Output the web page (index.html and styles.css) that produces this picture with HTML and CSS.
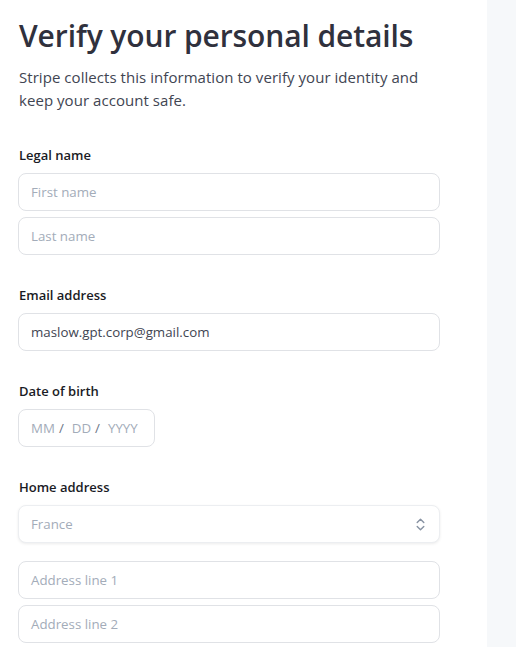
FILE: index.html
```html
<!DOCTYPE html>
<html lang="en">
<head>
<meta charset="utf-8">
<title>Verify your personal details</title>
<link rel="stylesheet" href="styles.css">
</head>
<body>
<div class="page">
  <main class="main">
    <header class="header">
      <h1 class="title">Verify your personal details</h1>
      <p class="subtitle">Stripe collects this information to verify your identity and keep your account safe.</p>
    </header>

    <section class="field">
      <div class="label">Legal name</div>
      <div class="stack">
        <div class="input"><span class="ph">First name</span></div>
        <div class="input"><span class="ph">Last name</span></div>
      </div>
    </section>

    <section class="field">
      <div class="label">Email address</div>
      <div class="input"><span class="val">maslow.gpt.corp@gmail.com</span></div>
    </section>

    <section class="field">
      <div class="label">Date of birth</div>
      <div class="input date">
        <span class="ph">MM</span><span class="sep">/</span><span class="ph">DD</span><span class="sep">/</span><span class="ph">YYYY</span>
      </div>
    </section>

    <section class="field">
      <div class="label">Home address</div>
      <div class="input select">
        <span class="ph">France</span>
        <svg class="chev" width="9" height="13" viewBox="0 0 9 13" aria-hidden="true">
          <path d="M1.2 4.6 L4.5 1.3 L7.8 4.6" fill="none" stroke="#8792a2" stroke-width="1.4" stroke-linecap="round" stroke-linejoin="round"/>
          <path d="M1.2 8.4 L4.5 11.7 L7.8 8.4" fill="none" stroke="#8792a2" stroke-width="1.4" stroke-linecap="round" stroke-linejoin="round"/>
        </svg>
      </div>
      <div class="stack address">
        <div class="input"><span class="ph">Address line 1</span></div>
        <div class="input"><span class="ph">Address line 2</span></div>
      </div>
    </section>
  </main>
  <aside class="side"></aside>
</div>
</body>
</html>
```

FILE: styles.css
```css
* { box-sizing: border-box; }
html, body { margin: 0; padding: 0; }
body {
  font-family: "Open Sans", "Noto Sans", sans-serif;
  color: #30313d;
  background: #ffffff;
}
.page {
  display: flex;
  min-height: 647px;
}
.main {
  width: 487px;
  flex: none;
  background: #ffffff;
  padding: 16px 47px 0 18px;
  display: flex;
  flex-direction: column;
  gap: 30px;
}
.side {
  flex: 1;
  background: #f6f8fa;
}
.header {
  padding-left: 1px;
  margin-bottom: 3px;
}
.title {
  margin: 0;
  font-size: 30px;
  line-height: 40px;
  font-weight: 600;
  color: #30313d;
  letter-spacing: -0.1px;
}
.subtitle {
  margin: 10px 0 0;
  font-size: 15px;
  line-height: 23px;
  color: #414552;
  letter-spacing: 0.05px;
}
.field {
  display: flex;
  flex-direction: column;
}
.label {
  font-size: 13px;
  line-height: 20px;
  font-weight: 600;
  color: #1a1b25;
  margin-bottom: 8px;
  padding-left: 1px;
}
.stack {
  display: flex;
  flex-direction: column;
  gap: 6px;
}
.address { margin-top: 18px; }
.input {
  height: 38px;
  border: 1px solid #e0e2e6;
  border-radius: 8px;
  padding: 0 12px;
  display: flex;
  align-items: center;
  font-size: 13.3px;
  background: #fff;
}
.ph { color: #a3acb9; }
.val { color: #414552; }
.date {
  width: 137px;
}
.sep {
  color: #6c7688;
  margin: 0 8px 0 4px;
}
.select {
  justify-content: space-between;
  border-color: #eceef1;
  box-shadow: 0 1px 3px rgba(0, 0, 0, 0.08);
}
.chev { margin-right: 2px; }
```
